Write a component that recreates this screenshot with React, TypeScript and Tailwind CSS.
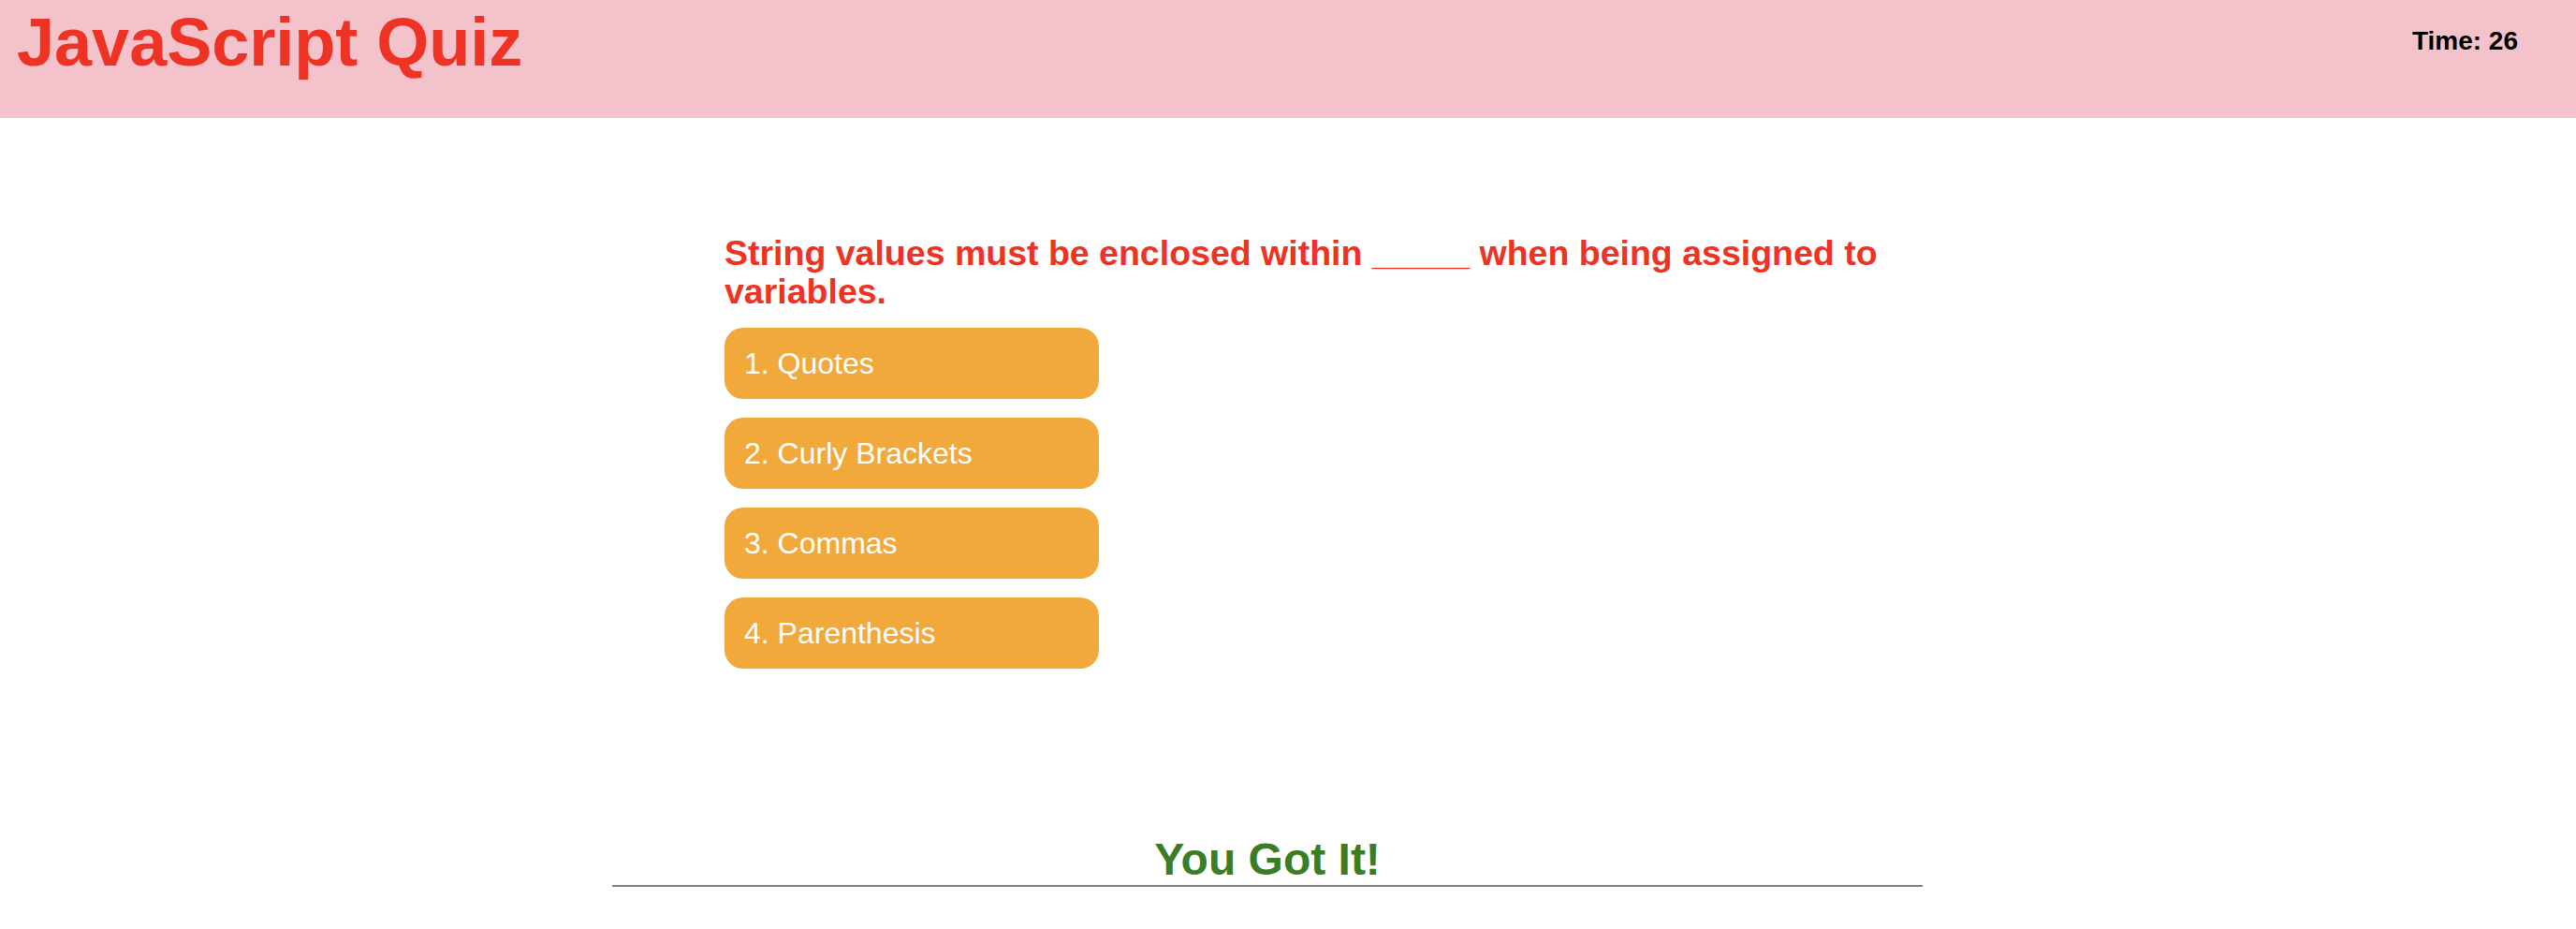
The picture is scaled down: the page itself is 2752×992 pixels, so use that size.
import { useState } from "react";

const choices = ["1. Quotes", "2. Curly Brackets", "3. Commas", "4. Parenthesis"];

export default function App() {
  const [time] = useState(26);

  return (
    <div className="min-h-screen bg-white font-['Liberation_Sans',Arial,sans-serif]">
      {/* header */}
      <header className="flex h-[126px] items-start justify-between bg-[#f4c2cb]">
        <h1 className="ml-[18px] mt-[9px] text-[72px] font-bold leading-none text-[#ee3224]">
          JavaScript Quiz
        </h1>
        <p className="mr-[62px] mt-[28px] text-[28px] font-bold leading-[32px] text-black">
          Time: {time}
        </p>
      </header>

      {/* question */}
      <main className="ml-[774px] mt-[124px] w-[1300px]">
        <h2 className="text-[37.5px] font-bold leading-[41px] text-[#ee3224]">
          String values must be enclosed within _____ when being assigned to variables.
        </h2>
        <div className="mt-[18px] flex flex-col gap-[20px]">
          {choices.map((c) => (
            <button
              key={c}
              className="flex h-[76px] w-[400px] items-center rounded-[20px] bg-[#f2a93b] pl-[21px] text-left text-[32px] leading-[37px] text-white"
            >
              {c}
            </button>
          ))}
        </div>
      </main>

      {/* result */}
      <div className="ml-[654px] mt-[176px] w-[1400px] border-b-2 border-[#808080] text-center text-[48px] font-bold leading-[55px] text-[#3a7d22]">
        You Got It!
      </div>
    </div>
  );
}
